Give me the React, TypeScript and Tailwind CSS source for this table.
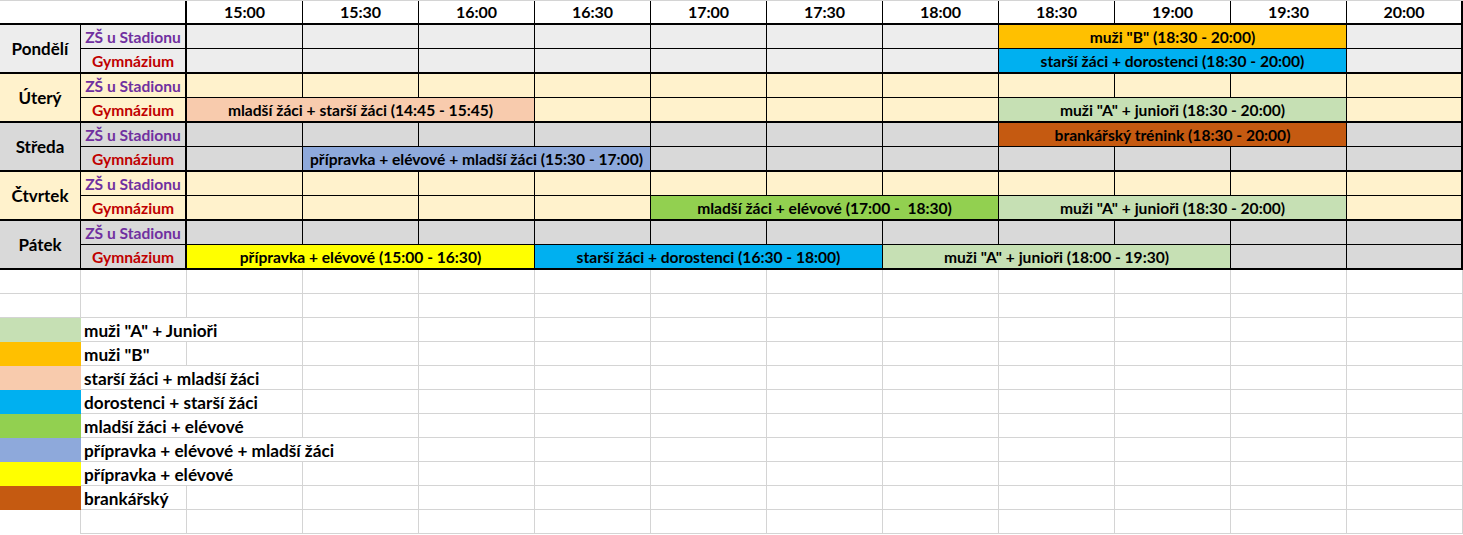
import React from 'react'

type Slot = { start: number; span: number; bg: string; text: string }

const times = ["15:00", "15:30", "16:00", "16:30", "17:00", "17:30", "18:00", "18:30", "19:00", "19:30", "20:00"]

const spanWidth: Record<number, string> = {
  1: "w-[116px]",
  3: "w-[348px]",
}

const days: { name: string; bg: string; zs: Slot[]; gym: Slot[] }[] = [
  {
    name: "Pondělí",
    bg: "bg-[#ededed]",
    zs: [{ start: 7, span: 3, bg: "bg-[#ffc000]", text: 'muži "B" (18:30 - 20:00)' }],
    gym: [{ start: 7, span: 3, bg: "bg-[#00b0f0]", text: "starší žáci + dorostenci (18:30 - 20:00)" }],
  },
  {
    name: "Úterý",
    bg: "bg-[#fff2cc]",
    zs: [],
    gym: [
      { start: 0, span: 3, bg: "bg-[#f8cbad]", text: "mladší žáci + starší žáci (14:45 - 15:45)" },
      { start: 7, span: 3, bg: "bg-[#c6e0b4]", text: 'muži "A" + junioři (18:30 - 20:00)' },
    ],
  },
  {
    name: "Středa",
    bg: "bg-[#d9d9d9]",
    zs: [{ start: 7, span: 3, bg: "bg-[#c55a11]", text: "brankářský trénink (18:30 - 20:00)" }],
    gym: [{ start: 1, span: 3, bg: "bg-[#8ea9db]", text: "přípravka + elévové + mladší žáci (15:30 - 17:00)" }],
  },
  {
    name: "Čtvrtek",
    bg: "bg-[#fff2cc]",
    zs: [],
    gym: [
      { start: 4, span: 3, bg: "bg-[#92d050]", text: "mladší žáci + elévové (17:00 -  18:30)" },
      { start: 7, span: 3, bg: "bg-[#c6e0b4]", text: 'muži "A" + junioři (18:30 - 20:00)' },
    ],
  },
  {
    name: "Pátek",
    bg: "bg-[#d9d9d9]",
    zs: [],
    gym: [
      { start: 0, span: 3, bg: "bg-[#ffff00]", text: "přípravka + elévové (15:00 - 16:30)" },
      { start: 3, span: 3, bg: "bg-[#00b0f0]", text: "starší žáci + dorostenci (16:30 - 18:00)" },
      { start: 6, span: 3, bg: "bg-[#c6e0b4]", text: 'muži "A" + junioři (18:00 - 19:30)' },
    ],
  },
]

const legend = [
  { bg: "bg-[#c6e0b4]", text: 'muži "A" + Junioři', w: "w-[222px]", rest: 10 },
  { bg: "bg-[#ffc000]", text: 'muži "B"', w: "w-[106px]", rest: 11 },
  { bg: "bg-[#f8cbad]", text: "starší žáci + mladší žáci", w: "w-[222px]", rest: 10 },
  { bg: "bg-[#00b0f0]", text: "dorostenci + starší žáci", w: "w-[222px]", rest: 10 },
  { bg: "bg-[#92d050]", text: "mladší žáci + elévové", w: "w-[222px]", rest: 10 },
  { bg: "bg-[#8ea9db]", text: "přípravka + elévové + mladší žáci", w: "w-[338px]", rest: 9 },
  { bg: "bg-[#ffff00]", text: "přípravka + elévové", w: "w-[222px]", rest: 10 },
  { bg: "bg-[#c55a11]", text: "brankářský", w: "w-[106px]", rest: 11 },
]

function cells(slots: Slot[]) {
  const out: { span: number; bg?: string; text?: string; last: boolean }[] = []
  let i = 0
  while (i < times.length) {
    const s = slots.find((x) => x.start === i)
    if (s) {
      out.push({ span: s.span, bg: s.bg, text: s.text, last: i + s.span === times.length })
      i += s.span
    } else {
      out.push({ span: 1, last: i === times.length - 1 })
      i += 1
    }
  }
  return out
}

function ScheduleRow({ label, color, slots, className }: { label: string; color: string; slots: Slot[]; className: string }) {
  return (
    <div className={`flex ${className}`}>
      <div className={`w-[106px] border-r-2 border-black flex items-center justify-center pt-[2px] ${color}`}>{label}</div>
      {cells(slots).map((c, idx) => (
        <div
          key={idx}
          className={`${spanWidth[c.span]} ${c.last ? 'border-r-2' : 'border-r'} border-black flex items-center justify-center whitespace-pre pt-[2px] ${c.bg ?? ''}`}
        >
          {c.text}
        </div>
      ))}
    </div>
  )
}

function GridRow({ first = "" }: { first?: string }) {
  return (
    <div className="flex h-[24px]">
      <div className={`w-[81px] ${first ? first : 'border-r border-b border-[#d4d4d4]'}`} />
      <div className="w-[106px] border-r border-b border-[#d4d4d4]" />
      {times.map((t) => (
        <div key={t} className="w-[116px] border-r border-b border-[#d4d4d4]" />
      ))}
    </div>
  )
}

export default function App() {
  return (
    <div className="w-[1463px] h-[535px] bg-white overflow-hidden font-['Lato',sans-serif] font-bold text-[15.6px] text-black leading-none">
      {/* header */}
      <div className="flex h-[25px] border-t border-t-[#d4d4d4] border-b-2 border-b-black">
        <div className="w-[187px] border-r-2 border-black" />
        {times.map((t, i) => (
          <div
            key={t}
            className={`w-[116px] ${i === times.length - 1 ? 'border-r-2' : 'border-r'} border-black flex items-center justify-center text-[16px]`}
          >
            {t}
          </div>
        ))}
      </div>

      {days.map((d) => (
        <div key={d.name} className={`flex h-[49px] border-b-2 border-black ${d.bg}`}>
          <div className="w-[81px] border-r border-black flex items-center justify-center text-[17px]">{d.name}</div>
          <div className="flex flex-col">
            <ScheduleRow label="ZŠ u Stadionu" color="text-[#7030a0]" slots={d.zs} className="h-[24px] border-b border-black" />
            <ScheduleRow label="Gymnázium" color="text-[#c00000]" slots={d.gym} className="flex-1" />
          </div>
        </div>
      ))}

      {/* empty sheet rows */}
      <GridRow />
      <GridRow />

      {legend.map((l) => (
        <div key={l.text} className="flex h-[24px]">
          <div className={`w-[81px] ${l.bg}`} />
          <div className={`${l.w} border-r border-b border-[#d4d4d4] flex items-center pl-[3px] pt-[2px] whitespace-pre text-[17.2px]`}>
            {l.text}
          </div>
          {times.slice(times.length - l.rest).map((t) => (
            <div key={t} className="w-[116px] border-r border-b border-[#d4d4d4]" />
          ))}
        </div>
      ))}

      <GridRow first="border-r border-[#d4d4d4]" />
    </div>
  )
}
